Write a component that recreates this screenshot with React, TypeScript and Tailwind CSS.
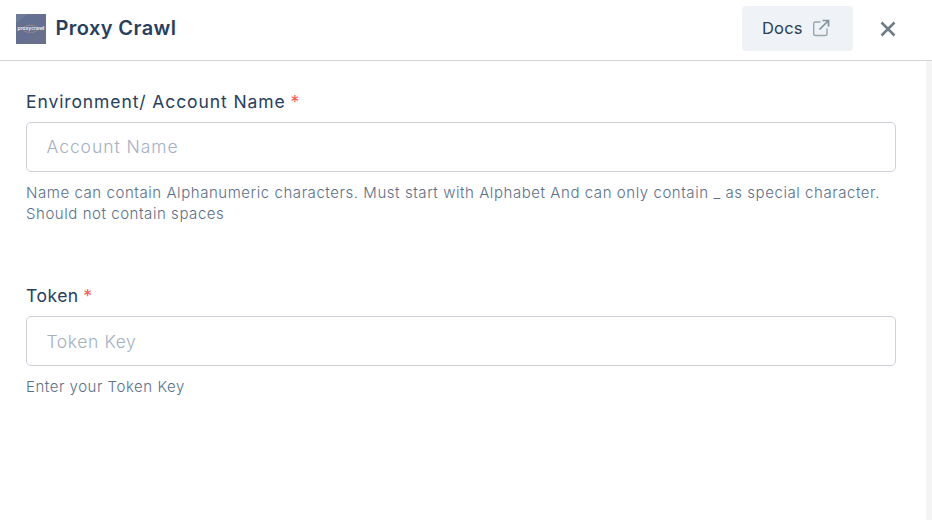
type FieldProps = {
  id: string;
  label: React.ReactNode;
  placeholder: React.ReactNode;
  help: React.ReactNode;
};

function Field({ id, label, placeholder, help }: FieldProps) {
  return (
    <section className="flex flex-col">
      <label htmlFor={id} className="flex h-6 items-center whitespace-nowrap text-[17.5px] leading-6 text-[#27405f]">
        {label}
      </label>
      <div
        id={id}
        className="mt-2 flex h-[50px] items-center rounded-[5px] border border-[#cfcfdc] bg-white pl-[19.5px] text-[17.5px] font-light text-[#a5b0bf]"
      >
        {placeholder}
      </div>
      <div className="mt-[10px] whitespace-nowrap text-[15px] leading-[21px] font-light text-[#5b6f88]">{help}</div>
    </section>
  );
}

function Logo() {
  return (
    <svg width="30" height="30" viewBox="0 0 30 30" className="block shrink-0">
      <rect width="30" height="30" fill="#656f92" />
      <path d="M0 0h12L0 9z" fill="#6d7c9d" />
      <path d="M30 6v24H8z" fill="#69708e" />
      <ellipse cx="14.5" cy="14.8" rx="7.5" ry="3.6" fill="none" stroke="#a58f7f" strokeWidth="0.8" />
      <text x="15" y="16.4" textAnchor="middle" fontSize="5" fontWeight="600" fill="#f1f2f7">
        proxycrawl
      </text>
    </svg>
  );
}

export default function App() {
  return (
    <div className="flex h-[520px] w-full flex-col overflow-hidden bg-white font-['Inter',sans-serif]">
      <header className="flex h-[61px] shrink-0 items-start border-b border-[#d0d5d8] pl-4">
        <div className="flex h-[58px] items-center">
          <Logo />
          <h1 className="mb-[2px] ml-[9.5px] whitespace-nowrap text-[20px] leading-6 font-[560] tracking-[0.42px] text-[#27405f]">Proxy Crawl</h1>
        </div>
        <button className="mt-[6px] ml-auto flex h-[45px] w-[111px] items-center rounded-[4px] bg-[#eff2f7] pl-5 text-[16.5px] text-[#2a4054]">
          <span className="w-[50px] text-left tracking-[0.2px]">Docs</span>
          <svg width="18" height="18" viewBox="0 0 18 18" fill="none" className="mb-[2px] block">
            <path d="M8 3H3.2Q1.7 3 1.7 4.5V15Q1.7 16.5 3.2 16.5H13.5Q15 16.5 15 15V10" stroke="#9aa8aa" strokeWidth="1.4" strokeLinecap="round" />
            <path d="M7.5 10.5 16 2M10.5 1.5H16.5V7.5" stroke="#80939b" strokeWidth="1.7" />
          </svg>
        </button>
        <button aria-label="Close" className="mt-[21px] mr-9 ml-[27px]">
          <svg width="16" height="16" viewBox="0 0 16 16" fill="none" className="block">
            <path d="M1.5 1.5 14.5 14.5M14.5 1.5 1.5 14.5" stroke="#6c7d88" strokeWidth="2.5" />
          </svg>
        </button>
      </header>
      <div className="flex min-h-0 flex-1">
        <main className="flex flex-1 flex-col gap-[60px] pt-[29px] pr-[30px] pl-[26px]">
          <Field
            id="account"
            label={<><span className="tracking-[0.9px]">Environment/ Account Name</span><span className="ml-[5px] text-[#f45b5b]">*</span></>}
            placeholder={<span className="tracking-[0.95px]">Account Name</span>}
            help={<><p><span className="tracking-[0.56px]">Name can contain Alphanumeric characters. Must start with Alphabet And can only contain _ as special character.</span></p><p><span className="tracking-[0.55px]">Should not contain spaces</span></p></>}
          />
          <Field
            id="token"
            label={<><span className="tracking-[0.5px]">Token</span><span className="ml-[4.5px] text-[#f45b5b]">*</span></>}
            placeholder={<span className="pt-[3px] tracking-[0.6px]">Token Key</span>}
            help={<p><span className="tracking-[0.53px]">Enter your Token Key</span></p>}
          />
        </main>
        <div className="w-[6px] rounded-t-[3px] bg-[#f4f4f5]" />
      </div>
    </div>
  );
}
